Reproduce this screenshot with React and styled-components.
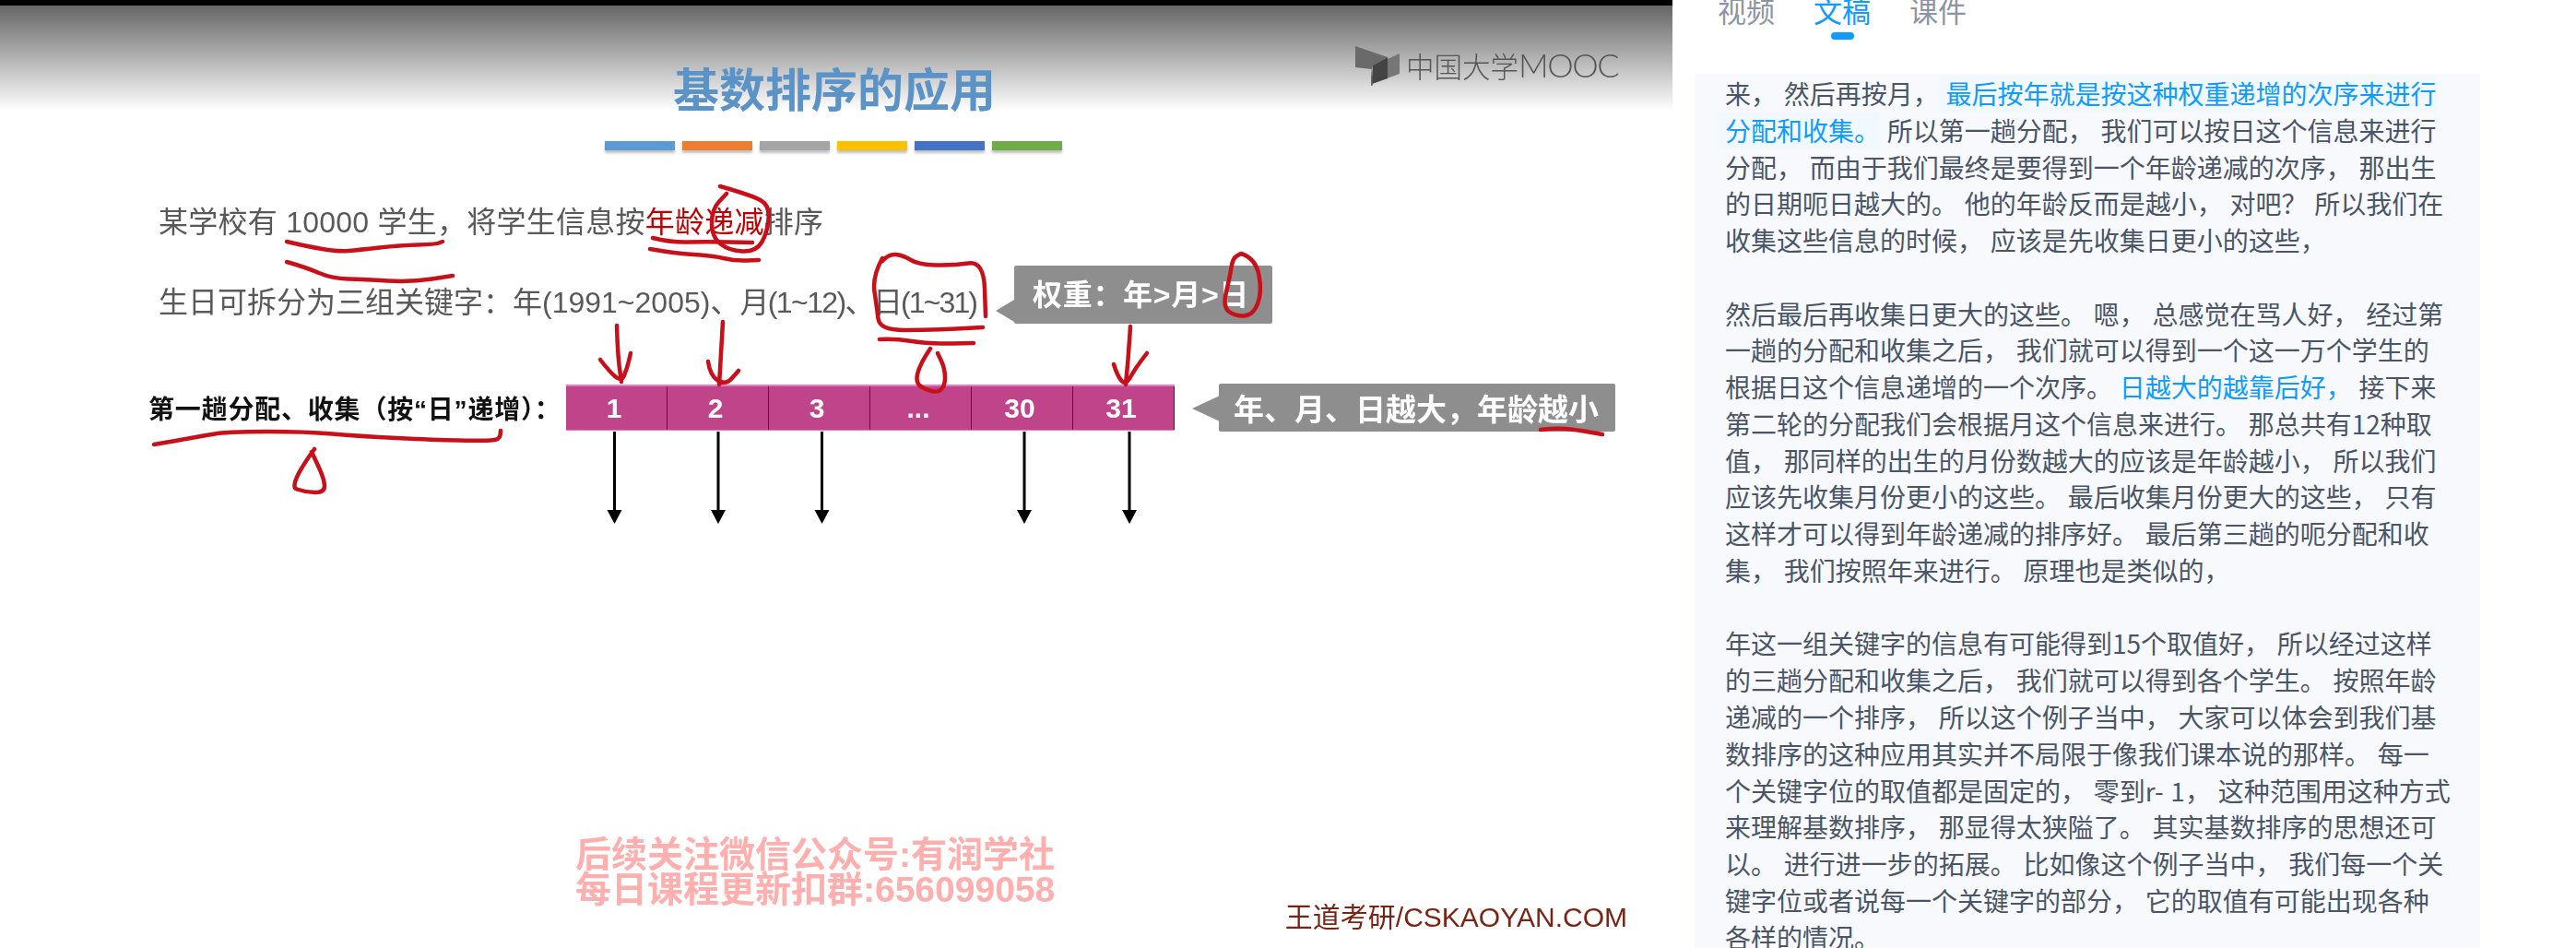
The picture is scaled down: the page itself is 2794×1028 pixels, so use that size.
import React from "react";
import styled, { createGlobalStyle } from "styled-components";

const GlobalStyle = createGlobalStyle`
  html, body {
    margin: 0;
    padding: 0;
    background: #fff;
    overflow: hidden;
  }
`;

const bars = ["#5b9bd5", "#ed7d31", "#a5a5a5", "#ffc000", "#4472c4", "#70ad47"];
const cells = ["1", "2", "3", "...", "30", "31"];
const arrowXs = [52.5, 165, 277.5, 497, 611];

// each entry is one rendered line; [text, kind] pieces get the blue treatment
const transcript = [
  ["来， 然后再按月， ", ["最后按年就是按这种权重递增的次序来进行", "tint"]],
  [["分配和收集。", "tint"], " 所以第一趟分配， 我们可以按日这个信息来进行"],
  ["分配， 而由于我们最终是要得到一个年龄递减的次序， 那出生"],
  ["的日期呃日越大的。 他的年龄反而是越小， 对吧？ 所以我们在"],
  ["收集这些信息的时候， 应该是先收集日更小的这些，"],
  [],
  ["然后最后再收集日更大的这些。 嗯， 总感觉在骂人好， 经过第"],
  ["一趟的分配和收集之后， 我们就可以得到一个这一万个学生的"],
  ["根据日这个信息递增的一个次序。 ", ["日越大的越靠后好，", "plain"], " 接下来"],
  ["第二轮的分配我们会根据月这个信息来进行。 那总共有12种取"],
  ["值， 那同样的出生的月份数越大的应该是年龄越小， 所以我们"],
  ["应该先收集月份更小的这些。 最后收集月份更大的这些， 只有"],
  ["这样才可以得到年龄递减的排序好。 最后第三趟的呃分配和收"],
  ["集， 我们按照年来进行。 原理也是类似的，"],
  [],
  ["年这一组关键字的信息有可能得到15个取值好， 所以经过这样"],
  ["的三趟分配和收集之后， 我们就可以得到各个学生。 按照年龄"],
  ["递减的一个排序， 所以这个例子当中， 大家可以体会到我们基"],
  ["数排序的这种应用其实并不局限于像我们课本说的那样。 每一"],
  ["个关键字位的取值都是固定的， 零到r- 1， 这种范围用这种方式"],
  ["来理解基数排序， 那显得太狭隘了。 其实基数排序的思想还可"],
  ["以。 进行进一步的拓展。 比如像这个例子当中， 我们每一个关"],
  ["键字位或者说每一个关键字的部分， 它的取值有可能出现各种"],
  ["各样的情况。"],
];

// pen strokes on the slide, in slide pixels
const strokes = [
  [[311, 262], [332, 267], [367, 273], [389, 271], [434, 266], [472, 265], [480, 262]],
  [[311, 284], [332, 290], [360, 302], [395, 303], [446, 306], [491, 299]],
  [[708, 258], [727, 263], [765, 262], [816, 263]],
  [[705, 270], [733, 275], [772, 277], [797, 283], [823, 282]],
  [[781, 202], [816, 212], [835, 223], [832, 253], [820, 273], [791, 272], [772, 257], [772, 227], [788, 210]],
  [[957, 283], [964, 275], [980, 277], [996, 287], [1034, 288], [1067, 283], [1069, 343]],
  [[957, 280], [946, 300], [951, 333], [954, 358], [1008, 358], [1066, 355]],
  [[954, 368], [970, 367], [1008, 373], [1056, 372]],
  [[1009, 378], [986, 412], [1013, 427], [1025, 420], [1025, 400], [1017, 383]],
  [[1346, 275], [1362, 280], [1369, 317], [1359, 342], [1340, 343], [1326, 333], [1334, 300], [1337, 280], [1346, 275]],
  [[669, 353], [670, 385], [674, 414]],
  [[651, 390], [661, 403], [674, 414], [680, 400], [684, 383]],
  [[784, 349], [782, 385], [780, 417]],
  [[768, 392], [770, 407], [787, 418], [801, 402]],
  [[1226, 354], [1224, 385], [1221, 417]],
  [[1208, 395], [1212, 408], [1221, 418], [1231, 400], [1244, 383]],
  [[1671, 466], [1686, 464], [1709, 466], [1738, 471]],
  [[167, 482], [191, 478], [223, 472], [249, 468], [332, 468], [389, 473], [472, 477], [523, 478], [542, 477], [543, 467]],
  [[341, 487], [312, 527], [332, 534], [352, 534], [352, 520], [338, 490]],
];

const smooth = (pts) => {
  let d = `M${pts[0][0]} ${pts[0][1]}`;
  for (let i = 1; i < pts.length - 1; i++) {
    const mx = (pts[i][0] + pts[i + 1][0]) / 2;
    const my = (pts[i][1] + pts[i + 1][1]) / 2;
    d += ` Q${pts[i][0]} ${pts[i][1]} ${mx} ${my}`;
  }
  const last = pts[pts.length - 1];
  return `${d} L${last[0]} ${last[1]}`;
};

const App = () => (
  <Page>
    <GlobalStyle />
    <Slide>
      <Header>
        <Title>基数排序的应用</Title>
        <Logo>
          <svg width="52" height="44" viewBox="0 0 52 44">
            <path d="M1 1 L36 13 L20 22 L19 26 L1 24 Z" fill="#6a6a6a" />
            <path d="M20 22 L49 9 L49 31 L19 42 Z" fill="#777" />
            <path d="M20 22 L36 13 L36 36 L19 42 Z" fill="#444" />
            <path d="M18 24 L20 43 L19 44 L18 44 Z" fill="#666" />
          </svg>
          <LogoText>
            中国大学<LogoLatin>MOOC</LogoLatin>
          </LogoText>
        </Logo>
      </Header>

      <Rainbow>
        {bars.map((c) => (
          <RainbowBar key={c} $color={c} />
        ))}
      </Rainbow>

      <SchoolLine>
        某学校有 10000 学生，将学生信息按<Red>年龄递减</Red>排序
      </SchoolLine>

      <BirthRow>
        <BirthText>
          生日可拆分为三组关键字：年(1991~2005)、
          <Tight $spacing="-1.6px">月(1~12)、</Tight>
          <Tight $spacing="-1.9px">日(1~31)</Tight>
        </BirthText>
        <WeightNote>权重：年&gt;月&gt;日</WeightNote>
      </BirthRow>

      <PassRow>
        <PassLabel>第一趟分配、收集（按“日”递增）：</PassLabel>
        <Cells>
          {cells.map((c) => (
            <Cell key={c}>{c}</Cell>
          ))}
        </Cells>
        <AgeNote>年、月、日越大，年龄越小</AgeNote>
      </PassRow>

      <Arrows width="660" height="100" viewBox="0 0 660 100">
        {arrowXs.map((x) => (
          <g key={x}>
            <line x1={x} y1="0" x2={x} y2="86" stroke="#000" strokeWidth="3" />
            <path d={`M${x - 8} 85 L${x + 8} 85 L${x} 100 Z`} fill="#000" />
          </g>
        ))}
      </Arrows>

      <Footer>
        <Watermark>
          后续关注微信公众号:有润学社
          <br />
          每日课程更新扣群:656099058
        </Watermark>
        <Credit>王道考研/CSKAOYAN.COM</Credit>
      </Footer>

      <Scribbles viewBox="0 0 1814 1028">
        {strokes.map((pts, i) => (
          <path key={i} d={smooth(pts)} />
        ))}
      </Scribbles>
    </Slide>

    <Side>
      <Tabs>
        <Tab>视频</Tab>
        <Tab $active>文稿</Tab>
        <Tab>课件</Tab>
      </Tabs>
      <Transcript>
        {transcript.map((line, i) => (
          <Line key={i}>
            {line.map((part, j) =>
              typeof part === "string" ? (
                part
              ) : (
                <Mark key={j} $tint={part[1] === "tint"}>
                  {part[0]}
                </Mark>
              )
            )}
          </Line>
        ))}
      </Transcript>
    </Side>
  </Page>
);

const Page = styled.div`
  display: flex;
  width: 2794px;
  height: 1028px;
  overflow: hidden;
  background: #fff;
  font-family: "Liberation Sans", "Noto Sans CJK SC", sans-serif;
`;

const Slide = styled.div`
  position: relative;
  flex: 0 0 1814px;
  height: 1028px;
  box-sizing: border-box;
  border-top: 6px solid #000;
  background: linear-gradient(#666 0, #fff 114px) no-repeat;
  display: flex;
  flex-direction: column;
  filter: blur(0.6px);
`;

const Header = styled.div`
  display: flex;
  justify-content: space-between;
  align-items: flex-start;
  padding: 0 59px 0 730px;
`;

const Title = styled.h1`
  margin: 63px 0 0;
  font-size: 50px;
  line-height: 60px;
  font-weight: 700;
  color: #5b93c7;
`;

const Logo = styled.div`
  display: flex;
  align-items: center;
  gap: 4px;
  margin-top: 42px;
`;

const LogoText = styled.span`
  font-family: "Noto Sans CJK SC", sans-serif;
  font-size: 30.5px;
  line-height: 44px;
  font-weight: 300;
  color: #555;
  white-space: nowrap;
`;

const LogoLatin = styled.span`
  font-family: "Lato", sans-serif;
  font-size: 36px;
  font-weight: 300;
  letter-spacing: -1.5px;
`;

const Rainbow = styled.div`
  display: flex;
  gap: 8px;
  margin-top: 24px;
  padding-left: 656px;
`;

const RainbowBar = styled.div`
  width: 76px;
  height: 10px;
  background: ${(p) => p.$color};
  box-shadow: 0 3px 3px rgba(0, 0, 0, 0.25);
`;

const SchoolLine = styled.div`
  margin-top: 58px;
  padding-left: 172px;
  font-size: 32px;
  line-height: 40px;
  letter-spacing: 0.25px;
  color: #595959;
  white-space: nowrap;
`;

const Red = styled.span`
  color: #c00000;
`;

const BirthRow = styled.div`
  display: flex;
  margin-top: 27px;
  padding-left: 172px;
`;

const BirthText = styled.div`
  flex: 0 0 928px;
  align-self: flex-end;
  margin-bottom: 3px;
  font-size: 32px;
  line-height: 40px;
  color: #595959;
  white-space: nowrap;
`;

const Tight = styled.span`
  letter-spacing: ${(p) => p.$spacing};
`;

const Note = styled.div`
  position: relative;
  box-sizing: border-box;
  display: flex;
  align-items: center;
  background: #8e8e8e;
  border-radius: 2px;
  color: #fff;
  font-weight: 700;
  white-space: nowrap;
  &::before {
    content: "";
    position: absolute;
    border-style: solid;
    border-color: transparent #8e8e8e transparent transparent;
  }
`;

const WeightNote = styled(Note)`
  width: 280px;
  height: 63px;
  padding: 0 0 6px 20px;
  font-size: 32px;
  letter-spacing: 0.7px;
  &::before {
    left: -20px;
    top: 37px;
    border-width: 12px 20px 12px 0;
  }
`;

const PassRow = styled.div`
  display: flex;
  align-items: center;
  margin-top: 65px;
  padding-left: 161px;
  height: 52px;
`;

const PassLabel = styled.div`
  flex: 0 0 453px;
  font-size: 28px;
  letter-spacing: 0.8px;
  font-weight: 700;
  color: #111;
  white-space: nowrap;
`;

const Cells = styled.div`
  display: grid;
  grid-template-columns: repeat(6, 110px);
  height: 50px;
  box-sizing: border-box;
  border-top: 2px solid #e77bc0;
  border-bottom: 1px solid #e77bc0;
`;

const Cell = styled.div`
  display: flex;
  align-items: center;
  justify-content: center;
  box-sizing: border-box;
  padding-right: 5px;
  background: #bf4489;
  border-right: 1.5px solid #1f2a5c;
  color: #fff;
  font-size: 30px;
  font-weight: 700;
`;

const AgeNote = styled(Note)`
  margin-left: 48px;
  width: 430px;
  height: 52px;
  padding-left: 16px;
  font-size: 33px;
  &::before {
    left: -29px;
    top: 13px;
    border-width: 14px 30px 14px 0;
  }
`;

const Arrows = styled.svg`
  display: block;
  flex: none;
  margin-left: 614px;
`;

const Footer = styled.div`
  display: flex;
  justify-content: space-between;
  margin-top: 340px;
  padding: 0 49px 0 624px;
  height: 105px;
`;

const Watermark = styled.div`
  font-size: 39px;
  line-height: 38px;
  font-weight: 700;
  color: #ffb0ae;
  white-space: nowrap;
`;

const Credit = styled.div`
  align-self: flex-end;
  font-size: 30px;
  line-height: 36px;
  color: #7a2415;
  white-space: nowrap;
`;

const Scribbles = styled.svg`
  position: absolute;
  left: 0;
  top: -6px;
  width: 1814px;
  height: 1028px;
  fill: none;
  stroke: #c8101a;
  stroke-width: 4.5;
  stroke-linecap: round;
  stroke-linejoin: round;
  pointer-events: none;
`;

const Side = styled.div`
  flex: 1;
  min-width: 0;
  height: 1028px;
  overflow: hidden;
  font-family: "Noto Sans CJK SC", sans-serif;
`;

const Tabs = styled.div`
  display: flex;
  gap: 42px;
  height: 80px;
  padding-left: 49px;
  overflow: hidden;
`;

const Tab = styled.div`
  position: relative;
  margin-top: -5px;
  height: 32px;
  font-size: 31px;
  line-height: 32px;
  color: ${(p) => (p.$active ? "#0f9bff" : "#8b95a5")};
  white-space: nowrap;
  ${(p) =>
    p.$active &&
    `&::after {
      content: "";
      position: absolute;
      left: 19px;
      top: 40px;
      width: 25px;
      height: 8px;
      border-radius: 4px;
      background: #0f9bff;
    }`}
`;

const Transcript = styled.div`
  box-sizing: border-box;
  width: 852px;
  margin-left: 24px;
  height: 948px;
  padding: 2px 0 0 33px;
  background: #f7f9fd;
  overflow: hidden;
`;

const Line = styled.div`
  height: 39.78px;
  font-size: 28px;
  line-height: 39.78px;
  color: #4a5568;
  white-space: pre;
  word-spacing: 1.5px;
`;

const Mark = styled.span`
  display: inline-block;
  color: #0f9bff;
  background: ${(p) => (p.$tint ? "#f2f9fe" : "transparent")};
  box-shadow: ${(p) => (p.$tint ? "-8px 0 0 #f2f9fe" : "none")};
`;

export default App;
